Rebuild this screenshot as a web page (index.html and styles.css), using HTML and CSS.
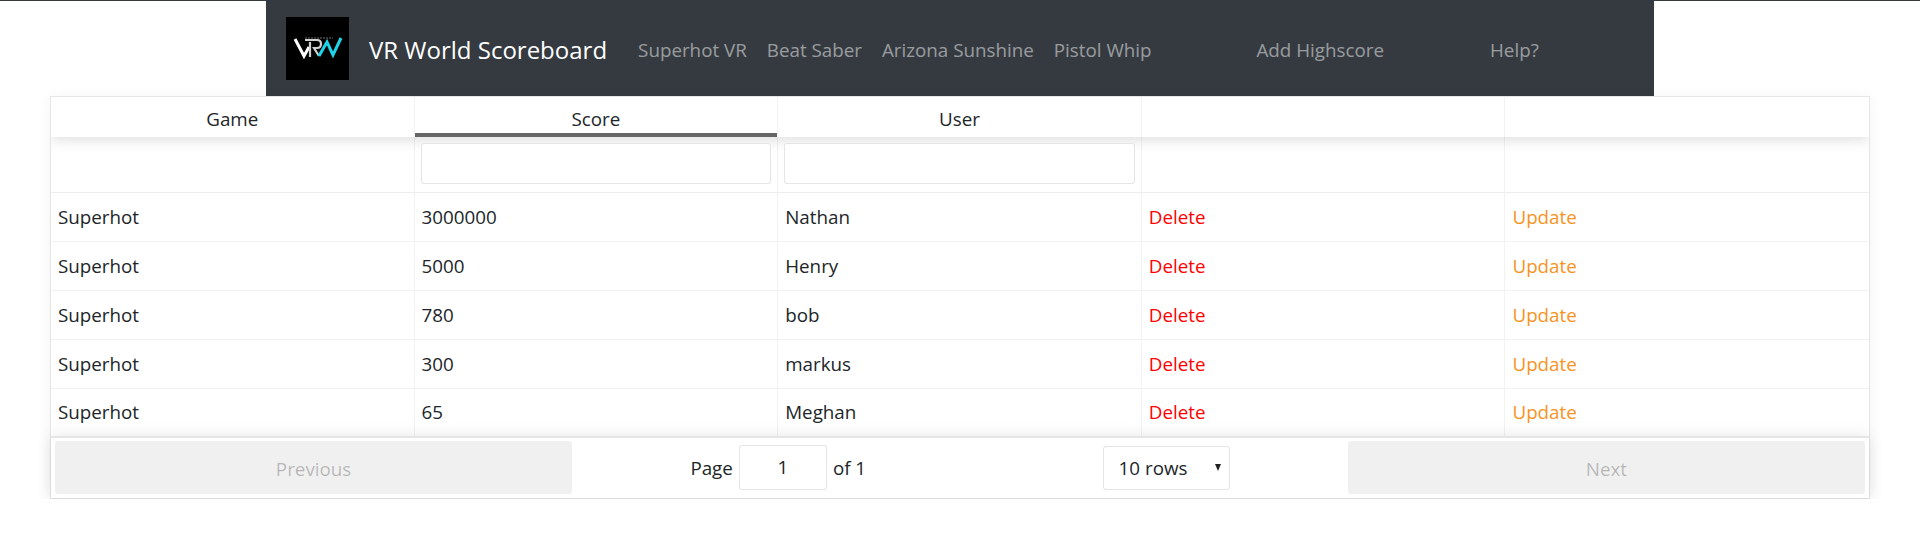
FILE: index.html
```html
<!DOCTYPE html>
<html lang="en">
<head>
<meta charset="utf-8">
<title>VR World Scoreboard</title>
<link rel="stylesheet" href="styles.css">
</head>
<body>
<nav class="navbar">
  <svg class="logo" viewBox="0 0 63 63" aria-label="VRW logo">
    <rect width="63" height="63" fill="#000"/>
    <path d="M9 22l9 17 5-9" fill="none" stroke="#fff" stroke-width="3"/>
    <path d="M24 40V25M19 23h12q4 0 4 4t-4 4h-3l5 8" fill="none" stroke="#cfcfcf" stroke-width="2.2"/>
    <path d="M33 39l8-14 6 13 8-17" fill="none" stroke="#1fd3e8" stroke-width="3"/>
    <path d="M19 21h28" stroke="#8a8a8a" stroke-width=".8" stroke-dasharray="2 1"/>
  </svg>
  <a class="brand" href="#">VR World Scoreboard</a>
  <ul class="links">
    <li><a href="#">Superhot VR</a></li>
    <li><a href="#">Beat Saber</a></li>
    <li><a href="#">Arizona Sunshine</a></li>
    <li><a href="#">Pistol Whip</a></li>
    <li class="add"><a href="#">Add Highscore</a></li>
    <li class="help"><a href="#">Help?</a></li>
  </ul>
</nav>
<section class="table">
  <div class="rows">
    <div class="row head">
      <div class="cell">Game</div>
      <div class="cell sorted">Score</div>
      <div class="cell">User</div>
      <div class="cell"></div>
      <div class="cell"></div>
    </div>
    <div class="row filters">
      <div class="cell"></div>
      <div class="cell"><input class="filter" type="text"></div>
      <div class="cell"><input class="filter" type="text"></div>
      <div class="cell"></div>
      <div class="cell"></div>
    </div>
    <div class="row">
      <div class="cell">Superhot</div><div class="cell">3000000</div><div class="cell">Nathan</div>
      <div class="cell"><a class="del" href="#">Delete</a></div><div class="cell"><a class="upd" href="#">Update</a></div>
    </div>
    <div class="row">
      <div class="cell">Superhot</div><div class="cell">5000</div><div class="cell">Henry</div>
      <div class="cell"><a class="del" href="#">Delete</a></div><div class="cell"><a class="upd" href="#">Update</a></div>
    </div>
    <div class="row">
      <div class="cell">Superhot</div><div class="cell">780</div><div class="cell">bob</div>
      <div class="cell"><a class="del" href="#">Delete</a></div><div class="cell"><a class="upd" href="#">Update</a></div>
    </div>
    <div class="row">
      <div class="cell">Superhot</div><div class="cell">300</div><div class="cell">markus</div>
      <div class="cell"><a class="del" href="#">Delete</a></div><div class="cell"><a class="upd" href="#">Update</a></div>
    </div>
    <div class="row last">
      <div class="cell">Superhot</div><div class="cell">65</div><div class="cell">Meghan</div>
      <div class="cell"><a class="del" href="#">Delete</a></div><div class="cell"><a class="upd" href="#">Update</a></div>
    </div>
  </div>
  <footer class="pagination">
    <button class="page-btn" disabled>Previous</button>
    <div class="center">
      <span class="info"><span>Page</span><input class="page-input" type="text" value="1"><span>of 1</span></span>
      <span class="size"><span class="size-text">10 rows</span><span class="caret"></span></span>
    </div>
    <button class="page-btn" disabled>Next</button>
  </footer>
</section>
</body>
</html>
```
FILE: styles.css
```css
* { box-sizing: border-box; }
html, body { margin: 0; padding: 0; }
body {
  font-family: "Open Sans", "Noto Sans", sans-serif;
  font-size: 18.8px;
  color: #212529;
  background: #fff;
  border-top: 1px solid #343a40;
}
a { text-decoration: none; }
.navbar {
  display: flex;
  align-items: center;
  width: 1388px;
  height: 95px;
  margin-left: 266px;
  padding: 0 20px;
  background: #343a40;
}
.logo { width: 63px; height: 63px; flex: none; }
.brand { margin-left: 20px; padding-top: 2px; color: #fff; font-size: 24px; white-space: nowrap; }
.links { display: flex; list-style: none; margin: 0 0 0 31px; padding: 2px 0 0; }
.links li { margin-right: 20px; }
.links a { color: rgba(255, 255, 255, .5); white-space: nowrap; }
.links .add { margin-left: 85px; margin-right: 0; }
.links .help { margin-left: 106px; margin-right: 0; }
.table {
  width: 1820px;
  margin-left: 50px;
  border: 1px solid rgba(0, 0, 0, .1);
  box-shadow: 0 2px 15px rgba(0, 0, 0, .05);
  display: flex;
  flex-direction: column;
}
.rows {
  display: flex;
  flex-direction: column;
  overflow: hidden;
}
.row {
  display: flex;
  height: 49px;
  border-bottom: 1px solid rgba(0, 0, 0, .05);
}
.cell {
  flex: 363.4 1 0;
  min-width: 0;
  padding: 7px 6px 8px 7px;
  border-right: 1px solid rgba(0, 0, 0, .05);
  display: flex;
  align-items: center;
}
.cell:last-child { flex-grow: 364.4; border-right: 0; }
.head {
  flex: none;
  height: 40px;
  border-bottom: 0;
  background: #fff;
  position: relative;
  z-index: 1;
  box-shadow: 0 2px 15px rgba(0, 0, 0, .15);
}
.head .cell { justify-content: center; padding: 10px 6px 7px; }
.head .sorted { box-shadow: inset 0 -4px 0 #666; }
.filters { height: 56px; border-bottom-color: rgba(0, 0, 0, .07); }
.filters .cell { padding: 6px 6px 8px; }
.filter {
  width: 100%;
  height: 41px;
  border: 1px solid rgba(0, 0, 0, .1);
  border-radius: 3px;
  background: #fff;
  outline: 0;
  position: relative;
  z-index: 2;
}
.del { color: #f00; }
.upd { color: #f7931e; }
.last { border-bottom: 0; height: 47px; }
.pagination {
  display: flex;
  align-items: stretch;
  height: 62px;
  padding: 3px 4px 4px;
  border-top: 2px solid rgba(0, 0, 0, .1);
  background: #fff;
  box-shadow: 0 0 15px rgba(0, 0, 0, .1);
  position: relative;
}
.page-btn {
  flex: 1 1 0;
  padding: 2px 0 0;
  border: 0;
  border-radius: 3px;
  background: rgba(0, 0, 0, .06);
  color: rgba(0, 0, 0, .25);
  font: inherit;
}
.center {
  flex: 1.5 1 0;
  display: flex;
  align-items: center;
  justify-content: space-around;
  padding-top: 1px;
}
.info { display: flex; align-items: center; gap: 6px; white-space: nowrap; }
.page-input {
  width: 88px;
  height: 45px;
  margin-top: -2px;
  border: 1px solid rgba(0, 0, 0, .1);
  border-radius: 3px;
  background: #fff;
  text-align: center;
  font: inherit;
  color: inherit;
  outline: 0;
}
.size {
  display: flex;
  align-items: center;
  justify-content: space-between;
  width: 127px;
  height: 44px;
  padding: 0 8px 0 15px;
  border: 1px solid rgba(0, 0, 0, .1);
  border-radius: 3px;
  color: #212529;
}
.caret {
  width: 0;
  height: 0;
  margin-bottom: 1px;
  border-left: 3.5px solid transparent;
  border-right: 3.5px solid transparent;
  border-top: 7px solid #222;
}
```
